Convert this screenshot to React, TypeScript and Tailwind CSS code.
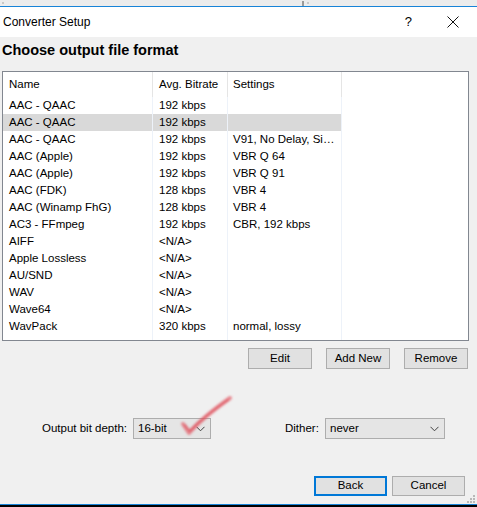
import React from "react";

const rows: [string, string, string, boolean?][] = [
  ["AAC - QAAC", "192 kbps", ""],
  ["AAC - QAAC", "192 kbps", "", true],
  ["AAC - QAAC", "192 kbps", "V91, No Delay, Si…"],
  ["AAC (Apple)", "192 kbps", "VBR Q 64"],
  ["AAC (Apple)", "192 kbps", "VBR Q 91"],
  ["AAC (FDK)", "128 kbps", "VBR 4"],
  ["AAC (Winamp FhG)", "128 kbps", "VBR 4"],
  ["AC3 - FFmpeg", "192 kbps", "CBR, 192 kbps"],
  ["AIFF", "<N/A>", ""],
  ["Apple Lossless", "<N/A>", ""],
  ["AU/SND", "<N/A>", ""],
  ["WAV", "<N/A>", ""],
  ["Wave64", "<N/A>", ""],
  ["WavPack", "320 kbps", "normal, lossy"],
];

function Chevron() {
  return (
    <svg width="9" height="6" viewBox="0 0 9 6" className="shrink-0">
      <polyline points="0.5,0.8 4.5,4.8 8.5,0.8" fill="none" stroke="#404040" strokeWidth="1" />
    </svg>
  );
}

function Btn({ label, w, primary }: { label: string; w: string; primary?: boolean }) {
  return (
    <div
      className={`${w} h-full flex items-center justify-center bg-[#e1e1e1] ${
        primary ? "border-2 border-[#0078d7]" : "border border-[#adadad]"
      }`}
    >
      {label}
    </div>
  );
}

export default function App() {
  return (
    <div
      className="relative w-[477px] h-[507px] bg-[#f0f0f0] overflow-hidden flex flex-col text-[11.5px] text-black"
      style={{ fontFamily: '"Liberation Sans", Arial, sans-serif' }}
    >
      {/* top strip */}
      <div className="h-[6px] bg-[#ececec] flex items-end shrink-0">
        <div className="ml-[2px] mb-[2px] w-[2px] h-[2px] bg-[#c8c8c8]" />
        <div className="ml-[298px] w-[2px] h-[5px] bg-[#9a9a9a]" />
        <div className="ml-[3px] mb-[2px] w-[2px] h-[2px] bg-[#c8c8c8]" />
      </div>
      <div className="h-[1px] bg-[#1883d7] shrink-0" />
      {/* title bar */}
      <div className="h-[30px] bg-white flex items-center pl-[3px] shrink-0 text-[12px]">
        <span>Converter Setup</span>
        <span className="ml-auto mr-[35px] text-[13px]">?</span>
        <svg width="12" height="12" viewBox="0 0 12 12" className="mr-[18px]">
          <line x1="0.5" y1="0.5" x2="11.5" y2="11.5" stroke="#111" strokeWidth="1" />
          <line x1="11.5" y1="0.5" x2="0.5" y2="11.5" stroke="#111" strokeWidth="1" />
        </svg>
      </div>
      {/* heading */}
      <div className="h-[26px] leading-[26px] pl-[2px] font-bold text-[14.5px] shrink-0">
        Choose output file format
      </div>
      {/* list */}
      <div className="mt-[8px] ml-[2px] w-[467px] h-[270px] border border-[#828790] bg-white shrink-0 flex flex-col">
        <div className="h-[25px] flex items-center shrink-0">
          <div className="w-[150px] h-full flex items-center pl-[6px] border-r border-[#e5e5e5]">Name</div>
          <div className="w-[75px] h-full flex items-center pl-[6px] border-r border-[#e5e5e5]">Avg. Bitrate</div>
          <div className="w-[114px] h-full flex items-center pl-[5px] border-r border-[#e5e5e5]">Settings</div>
        </div>
        {rows.map(([n, b, s, sel], i) => (
          <div key={i} className={`h-[17px] flex w-[339px] ${sel ? "bg-[#d9d9d9]" : ""}`}>
            <div className="w-[150px] h-full flex items-center pl-[6px] border-r border-[#edf2f9] whitespace-nowrap">{n}</div>
            <div className="w-[75px] h-full flex items-center pl-[6px] border-r border-[#edf2f9] whitespace-nowrap">{b}</div>
            <div className="w-[114px] h-full flex items-center pl-[5px] border-r border-[#edf2f9] whitespace-nowrap">{s}</div>
          </div>
        ))}
        <div className="flex-1 flex w-[339px]">
          <div className="w-[150px] h-full border-r border-[#edf2f9]" />
          <div className="w-[75px] h-full border-r border-[#edf2f9]" />
          <div className="w-[114px] h-full border-r border-[#edf2f9]" />
        </div>
      </div>
      {/* edit buttons */}
      <div className="mt-[7px] h-[21px] flex pl-[248px] gap-[14px] shrink-0">
        <Btn label="Edit" w="w-[64px]" />
        <Btn label="Add New" w="w-[64px]" />
        <Btn label="Remove" w="w-[64px]" />
      </div>
      {/* options */}
      <div className="mt-[49px] h-[21px] flex items-center pl-[42px] shrink-0">
        <span className="w-[91px] shrink-0 whitespace-nowrap">Output bit depth:</span>
        <div className="w-[78px] shrink-0 h-full bg-[#e5e5e5] border border-[#adadad] flex items-center pl-[4px] pr-[5px]">
          <span>16-bit</span>
          <span className="ml-auto">
            <Chevron />
          </span>
        </div>
        <span className="ml-[74px] w-[40px] shrink-0 whitespace-nowrap">Dither:</span>
        <div className="w-[120px] shrink-0 h-full bg-[#e5e5e5] border border-[#adadad] flex items-center pl-[4px] pr-[5px]">
          <span>never</span>
          <span className="ml-auto">
            <Chevron />
          </span>
        </div>
      </div>
      {/* bottom buttons */}
      <div className="mt-[37px] h-[20px] flex pl-[314px] gap-[5px] shrink-0">
        <Btn label="Back" w="w-[73px]" primary />
        <Btn label="Cancel" w="w-[73px]" />
      </div>
      <div className="mt-auto h-[1px] bg-[#1883d7] shrink-0" />
      <div className="h-[2px] bg-black shrink-0" />

      {/* resize grip */}
      <svg className="absolute left-[466px] top-[494px]" width="10" height="10" viewBox="0 0 10 10">
        <rect x="7" y="1" width="2" height="2" fill="#b8b8b8" />
        <rect x="4" y="4" width="2" height="2" fill="#b8b8b8" />
        <rect x="7" y="4" width="2" height="2" fill="#b8b8b8" />
        <rect x="1" y="7" width="2" height="2" fill="#b8b8b8" />
        <rect x="4" y="7" width="2" height="2" fill="#b8b8b8" />
        <rect x="7" y="7" width="2" height="2" fill="#b8b8b8" />
      </svg>

      {/* red check mark overlay */}
      <svg className="absolute left-[178px] top-[392px]" width="58" height="46" viewBox="0 0 58 46">
        <defs>
          <filter id="blur" x="-20%" y="-20%" width="140%" height="140%">
            <feGaussianBlur stdDeviation="0.8" />
          </filter>
        </defs>
        <g filter="url(#blur)" fill="none" strokeLinecap="round" strokeLinejoin="round">
          <path d="M5 32 L11 41 Q24 26 52 6" stroke="#e4606b" strokeOpacity="0.7" strokeWidth="4" />
          <path d="M7 33 L12 39 Q26 24 50 8" stroke="#d83b48" strokeOpacity="0.5" strokeWidth="2" />
        </g>
      </svg>
    </div>
  );
}
